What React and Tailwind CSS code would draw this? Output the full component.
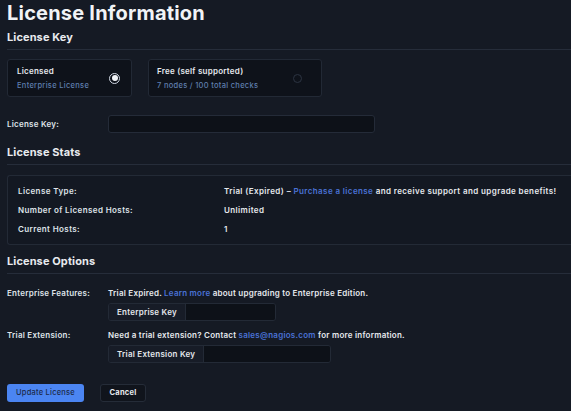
const STATS = [
  ['License Type:', 'trial'],
  ['Number of Licensed Hosts:', 'Unlimited'],
  ['Current Hosts:', '1'],
];

function Heading({ children }) {
  return (
    <div className="border-b border-[#262d3a] pb-[5px]">
      <h2 className="text-[11px] leading-[14px] font-bold text-[#e8eaee] tracking-[0.01em]">{children}</h2>
    </div>
  );
}

function Radio({ checked }) {
  return checked ? (
    <span className="w-[11px] h-[11px] rounded-full border border-[#cfd6e2] flex items-center justify-center">
      <span className="w-[6px] h-[6px] rounded-full bg-[#f2f4f8]" />
    </span>
  ) : (
    <span className="w-[9px] h-[9px] rounded-full border-[1.5px] border-[#2c3442]" />
  );
}

function KeyGroup({ label, inputW }) {
  return (
    <div className="self-start flex h-[18px] rounded-[3px] border border-[#232a36] overflow-hidden">
      <span className="px-[8px] flex items-center bg-[#171c27] border-r border-[#232a36] text-[8px] font-semibold tracking-[0.03em] text-[#e4e7ec]">
        {label}
      </span>
      <span className={`bg-[#0d1118] ${inputW}`} />
    </div>
  );
}

export default function App() {
  return (
    <div
      className="w-[571px] h-[411px] overflow-hidden bg-[#151a24] text-[#e4e7ec] pl-[7px]"
      style={{ fontFamily: 'Inter, "Noto Sans", sans-serif' }}
    >
      <h1 className="text-[20px] leading-[24px] font-bold text-[#f1f3f6] pt-[1px] tracking-[0.01em]">License Information</h1>

      <div className="mt-[5px]">
        <Heading>License Key</Heading>
      </div>

      {/* License choice cards */}
      <div className="flex gap-[16px] mt-[9px]">
        <div className="w-[125px] h-[38px] rounded-[3px] border border-[#222935] bg-[#0e121a] flex items-center justify-between pl-[9px] pr-[11px]">
          <div className="flex flex-col gap-[5px]">
            <span className="text-[8px] leading-[9px] font-semibold tracking-[0.03em] text-[#e6e9ee]">Licensed</span>
            <span className="text-[7.5px] leading-[9px] font-medium tracking-[0.04em] text-[#5f7fae]">Enterprise License</span>
          </div>
          <Radio checked />
        </div>
        <div className="w-[174px] h-[38px] rounded-[3px] border border-[#222935] bg-[#0e121a] flex items-center justify-between pl-[8px] pr-[19px]">
          <div className="flex flex-col gap-[5px]">
            <span className="text-[8px] leading-[9px] font-semibold tracking-[0.03em] text-[#e6e9ee]">Free (self supported)</span>
            <span className="text-[7.5px] leading-[9px] font-medium tracking-[0.04em] text-[#5f7fae]">7 nodes / 100 total checks</span>
          </div>
          <Radio />
        </div>
      </div>

      <div className="flex items-center mt-[18px]">
        <span className="w-[101px] text-[8px] font-semibold tracking-[0.03em] text-[#dfe3e9]">License Key:</span>
        <span className="w-[267px] h-[18px] rounded-[3px] border border-[#242b38] bg-[#0d1118]" />
      </div>

      <div className="mt-[12px]">
        <Heading>License Stats</Heading>
      </div>

      {/* Stats box */}
      <div className="mt-[10px] h-[70px] rounded-l-[3px] border border-r-0 border-[#232a36] bg-[#131822] pl-[10px] pt-[10px] flex flex-col gap-[9px]">
        {STATS.map(([k, v]) => (
          <div key={k} className="flex text-[8px] leading-[10px] font-semibold tracking-[0.05em]">
            <span className="w-[206px] text-[#dfe3e9]">{k}</span>
            {v === 'trial' ? (
              <span className="text-[#e6e9ee]">
                Trial (Expired) – <span className="text-[#4a72d6]">Purchase a license</span> and receive support and upgrade benefits!
              </span>
            ) : (
              <span className="text-[#e6e9ee]">{v}</span>
            )}
          </div>
        ))}
      </div>

      <div className="mt-[9px]">
        <Heading>License Options</Heading>
      </div>

      <div className="mt-[14px] flex text-[8px] leading-[10px] font-semibold tracking-[0.03em]">
        <span className="w-[101px] text-[#dfe3e9]">Enterprise Features:</span>
        <div className="flex flex-col gap-[5px]">
          <span className="text-[#e6e9ee]">
            Trial Expired. <span className="text-[#4a72d6]">Learn more</span> about upgrading to Enterprise Edition.
          </span>
          <KeyGroup label="Enterprise Key" inputW="w-[89px]" />
        </div>
      </div>

      <div className="mt-[9px] flex text-[8px] leading-[10px] font-semibold tracking-[0.03em]">
        <span className="w-[101px] text-[#dfe3e9]">Trial Extension:</span>
        <div className="flex flex-col gap-[5px]">
          <span className="text-[#e6e9ee]">
            Need a trial extension? Contact <span className="text-[#4a72d6]">sales@nagios.com</span> for more information.
          </span>
          <KeyGroup label="Trial Extension Key" inputW="w-[126px]" />
        </div>
      </div>

      <div className="mt-[21px] flex gap-[16px]">
        <button className="w-[77px] h-[18px] rounded-[3px] bg-[#4b85f2] text-[7.5px] font-medium tracking-[0.03em] text-[#1d2b4a]">
          Update License
        </button>
        <button className="w-[46px] h-[18px] rounded-[3px] border border-[#252c38] bg-[#10141c] text-[7.5px] font-bold tracking-[0.03em] text-[#e8eaee]">
          Cancel
        </button>
      </div>
    </div>
  );
}
